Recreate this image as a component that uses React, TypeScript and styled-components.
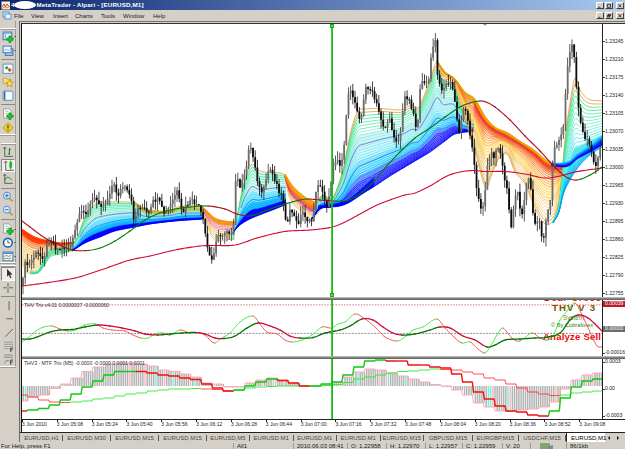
import React from 'react';

import styled, { createGlobalStyle } from 'styled-components';

type Point = [number, number];

const color = {
  face: '#d4d0c8',
  up: '#14c814',
  down: '#f01010',
};

const GlobalStyle = createGlobalStyle`
  body {
    margin: 0;
    overflow: hidden;
    background: ${color.face};
    font-family: "Liberation Sans", Arial, sans-serif;
  }
`;

/* ---------- layout ---------- */

const Window = styled.div`
  display: flex;
  flex-direction: column;
  width: 625px;
  height: 449px;
  overflow: hidden;
  color: #222;
  font-size: 6px;
  line-height: 1;
  white-space: nowrap;
`;

const TitleBar = styled.header`
  display: flex;
  align-items: center;
  flex: none;
  height: 10px;
  padding-left: 1px;
  background: linear-gradient(90deg, #0a246a, #3f5f9e 35%, #a6caf0);
  color: #fff;
  font-size: 6.2px;
  font-weight: bold;
`;

const Redaction = styled.span`
  width: 22px;
  height: 8px;
  border-radius: 50%;
  background: #fff;
`;

const TitleText = styled.span`
  flex: 1;
  letter-spacing: 0.16px;
`;

const MenuBar = styled.nav`
  display: flex;
  align-items: center;
  flex: none;
  height: 11px;
  padding-left: 2px;
  background: ${color.face};
`;

const MenuItem = styled.span<{ $width: number }>`
  width: ${props => props.$width}px;
`;

const Spacer = styled.div`
  flex: 1;
`;

const WindowButtons = styled.div`
  display: flex;
  gap: 1px;
  padding-right: 1px;
`;

const WindowButton = styled.span`
  box-sizing: border-box;
  display: flex;
  width: 8px;
  height: 7px;
  background: ${color.face};
  border: 0.5px solid;
  border-color: #fff #404040 #404040 #fff;

  &:last-child {
    margin-left: 2px;
  }
`;

const Body = styled.div`
  display: flex;
  flex: none;
  height: 421px;
`;

const Sidebar = styled.aside`
  flex: none;
  width: 19px;
  background: ${color.face};
`;

const ToolGroup = styled.div<{ $height: number }>`
  box-sizing: border-box;
  display: flex;
  flex-direction: column;
  align-items: flex-start;
  width: 16px;
  height: ${props => props.$height}px;
  border-right: 1px solid #a09c94;
  border-bottom: 1px solid #fff;
  box-shadow: 0 1px 0 #a09c94;
`;

const Grip = styled.div<{ $top: number }>`
  flex: none;
  width: 15px;
  height: 2px;
  margin: ${props => props.$top}px 1px 0;
  border-top: 1px solid #fff;
  border-bottom: 1px solid #999;
  box-sizing: border-box;
`;

const Rule = styled.div`
  flex: none;
  width: 14px;
  height: 1px;
  margin: 1.5px 1px 2px;
  background: #8c8a84;
`;

const Tool = styled.div<{ $pressed?: boolean }>`
  display: flex;
  align-items: center;
  box-sizing: border-box;
  flex: none;
  width: ${props => props.$pressed ? 14 : 16}px;
  height: 13.7px;
  padding-left: ${props => props.$pressed ? 1 : 0}px;
  margin-left: 0.5px;
  border: 0.5px solid;
  border-color: ${props => props.$pressed ? '#888 #fff #fff #888' : 'transparent'};
  background: ${props => props.$pressed ? '#eeece8' : 'none'};
`;

const Arrow = styled.i`
  flex: none;
  width: 0;
  border: 1.4px solid transparent;
  border-top: 1.8px solid #222;
  border-bottom: 0;
`;

const Main = styled.main`
  display: flex;
  flex-direction: column;
  box-sizing: border-box;
  width: 606px;
  border-left: 1px solid #6c6a66;
  border-top: 1px solid #77756f;
`;

const ChartFrame = styled.section`
  box-sizing: border-box;
  flex: none;
  height: 409px;
  margin-left: 1px;
  border-left: 1px solid #111;
  border-top: 1px solid #333;
  margin-top: 1px;
  background: #fff;
`;

const Panel = styled.div<{ $height: number }>`
  display: flex;
  height: ${props => props.$height}px;
  overflow: hidden;
`;

const Plot = styled.svg`
  display: block;
  flex: none;
  width: 580px;
  height: 100%;
`;

const Splitter = styled.div`
  box-sizing: border-box;
  height: 3px;
  background: #858585;
  border-top: 1px solid #b5b5b5;
  border-bottom: 1px solid #666;
`;

const PriceAxis = styled.div<{ $top: number }>`
  display: flex;
  flex-direction: column;
  justify-content: space-between;
  box-sizing: border-box;
  width: 23px;
  padding-top: ${props => props.$top}px;
  border-left: 1px solid #222;
  font-size: 5.1px;
`;

const Price = styled.span<{ $bg?: string }>`
  display: flex;
  align-items: center;
  height: 6px;
  color: ${props => props.$bg ? '#fff' : '#222'};
  background: ${props => props.$bg || 'none'};

  &::before {
    content: '';
    width: 2px;
    height: 1px;
    background: ${props => props.$bg || '#444'};
  }
`;

const TimeAxis = styled.div`
  display: grid;
  grid-template-columns: repeat(17, 34.83px);
  box-sizing: border-box;
  width: 603px;
  height: 10px;
  overflow: hidden;
  border-top: 1px solid #222;
  font-size: 5px;
`;

const Time = styled.span`
  &::before {
    content: '';
    display: block;
    width: 1px;
    height: 2px;
    background: #222;
  }
`;

const TabBar = styled.div`
  display: flex;
  align-items: center;
  flex: none;
  height: 10px;
  padding-left: 1px;
  border-top: 1px solid #222;
  background: ${color.face};
`;

const Tab = styled.span<{ $width: number }>`
  display: flex;
  align-items: center;
  justify-content: center;
  box-sizing: border-box;
  flex: none;
  width: ${props => props.$width}px;
  height: 6px;
  color: #4a4844;
  border-right: 1px solid #555;
`;

const ActiveTab = styled(Tab)`
  justify-content: flex-start;
  height: 10px;
  padding-left: 4px;
  color: #000;
  background: #fff;
  border-right: 0;
  border-left: 1px solid #222;
`;

const TabArrows = styled.svg`
  width: 17px;
  height: 8px;
`;

const StatusBar = styled.footer`
  display: flex;
  flex: none;
  height: 7px;
  overflow: hidden;
  padding-top: 1px;
  background: ${color.face};
`;

const Status = styled.span<{ $width: number; $first?: boolean }>`
  box-sizing: border-box;
  flex: none;
  width: ${props => props.$width}px;
  height: 6px;
  padding-left: ${props => props.$first ? 1 : 3}px;
  border-left: ${props => props.$first ? '0' : '1px solid #999'};
`;

/* ---------- data ---------- */

const price: Point[] = [
  [22, 289], [24, 276], [26, 265], [30, 265], [34, 258], [38, 254], [42, 256], [46, 254], [50, 238], [54, 243],
  [58, 249], [62, 249], [66, 247], [70, 245], [74, 240], [78, 223], [82, 214], [86, 212], [90, 208], [94, 200],
  [100, 201], [104, 206], [108, 200], [112, 188], [115, 186], [119, 194], [124, 187], [128, 192], [132, 200],
  [135, 218], [140, 207], [145, 209], [150, 214], [155, 201], [160, 202], [165, 213], [170, 208], [175, 198],
  [178, 192], [183, 212], [188, 205], [193, 202], [200, 208], [205, 225], [208, 245], [213, 260], [217, 240],
  [222, 236], [228, 230], [232, 234], [234, 240], [236, 185], [242, 185], [247, 170], [250, 146], [252, 149],
  [256, 165], [261, 190], [266, 187], [270, 170], [275, 177], [280, 190], [285, 203], [288, 225], [292, 210],
  [298, 223], [304, 213], [310, 222], [313, 220], [316, 200], [320, 182], [324, 195], [328, 205], [333, 175],
  [338, 158], [342, 163], [346, 138], [348, 105], [352, 93], [357, 105], [362, 117], [367, 88], [372, 91],
  [377, 103], [382, 118], [386, 128], [390, 120], [395, 135], [400, 140], [403, 120], [406, 97], [411, 102],
  [415, 115], [418, 127], [421, 93], [425, 81], [430, 79], [433, 52], [437, 44], [439, 80], [445, 87],
  [450, 82], [455, 95], [460, 132], [465, 106], [470, 128], [474, 150], [478, 192], [484, 205], [490, 157],
  [495, 156], [500, 148], [505, 175], [509, 195], [512, 230], [515, 205], [518, 190], [523, 214], [527, 186],
  [531, 182], [535, 222], [540, 220], [544, 239], [548, 215], [551, 205], [555, 150], [560, 140], [565, 120],
  [568, 72], [572, 50], [574, 40], [577, 80], [581, 120], [586, 138], [592, 147], [597, 166], [602, 147],
];

const movingAverage: Point[] = [
  [22, 221], [30, 227], [45, 238], [60, 245], [72, 250], [87, 250.5], [100, 248], [115, 241], [130, 231],
  [145, 220], [160, 213], [175, 209], [190, 207], [208, 206], [225, 209], [237, 214], [249, 216], [257, 214],
  [270, 209], [285, 204], [300, 200], [308, 199], [320, 200], [335, 201], [345, 201], [355, 197], [365, 190],
  [375, 180], [385, 168], [400, 152], [415, 138], [430, 128], [445, 117], [460, 107], [470, 103], [480, 101],
  [486, 102], [495, 107], [510, 120], [525, 136], [540, 151], [550, 162], [560, 172], [568, 178], [577, 180],
  [590, 175], [602, 167],
];

const baseline: Point[] = [
  [22, 286], [45, 283], [75, 278], [95, 272], [115, 265], [130, 260], [150, 256], [175, 250], [200, 246],
  [212, 245.5], [235, 245], [257, 238], [285, 231.5], [310, 230], [330, 227.5], [343, 223], [360, 214],
  [375, 206], [390, 200], [405, 195], [415, 193], [430, 186], [447, 176], [460, 172], [473, 170.5],
  [485, 171.5], [505, 171.5], [525, 174], [545, 178], [560, 176], [575, 172], [602, 168],
];

// solid part of a ribbon: from, to (0 = fast edge, 1 = slow edge), fill, opacity
type Wash = [number, number, string, number];

interface RibbonProps {
  fast: Point[];
  slow: Point[];
  colors: string[];
  washes?: Wash[];
  count?: number;
  bias?: number;
  width?: number;
}

const rising = ['#d9952c', '#25e88d', '#4ce9a8', '#7fe9cf', '#8eeae6', '#79e4f4', '#48e2ff', '#00d0ff', '#0aa8ff', '#0000ff', '#0000ff'];
const risingWashes: Wash[] = [[0.02, 0.5, '#b8f4e4', 0.5], [0.5, 0.72, '#40dcff', 0.6], [0.7, 0.86, '#00b4ff', 0.85], [0.84, 1, '#0000ff', 0.95]];
const falling = ['#d99a30', '#eec169', '#f1cf79', '#f0c060', '#ffd54a', '#ff9b2e', '#f8602a', '#f28a14', '#e0a000'];

const ribbons: RibbonProps[] = [
  {
    fast: [[22, 264], [28, 273], [37, 273], [43, 266], [50, 255], [60, 253], [75, 249]],
    slow: [[22, 229], [35, 237], [50, 241], [62, 243], [75, 242]],
    colors: ['#e8bd59', '#f1c465', '#f4c870', '#f0a94a', '#ee9447', '#ff4a10', '#ff3800'],
    washes: [[0, 0.7, '#ffe2a0', 0.5], [0.68, 0.86, '#f6a060', 0.7], [0.84, 1, '#ff3c00', 1]],
    count: 17,
  },
  {
    fast: [[30, 273], [38, 273], [44, 266], [50, 257], [60, 254], [75, 250]],
    slow: [[30, 272], [38, 271], [44, 260], [50, 250], [60, 248], [75, 246]],
    colors: ['#28d878', '#24e6a4', '#42e0c0'],
    count: 8,
  },
  {
    fast: [[72, 247], [78, 236], [83, 222], [90, 210], [97, 203], [110, 202], [125, 202], [136, 203], [143, 209], [150, 211], [170, 211], [180, 208], [190, 208], [203, 209]],
    slow: [[72, 251], [85, 243], [100, 237], [115, 231], [135, 227], [150, 224], [175, 221], [203, 219]],
    colors: rising,
    washes: risingWashes,
    count: 24,
  },
  {
    fast: [[134, 202], [143, 208], [150, 210], [170, 211], [178, 207], [190, 206], [203, 206]],
    slow: [[134, 204], [143, 211], [150, 213], [170, 213], [178, 210], [190, 210], [203, 210]],
    colors: ['#e09a00', '#f0a818'],
    count: 4,
  },
  {
    fast: [[201, 210], [207, 225], [212, 237], [218, 241], [225, 240], [235, 239]],
    slow: [[201, 205], [207, 211], [215, 218], [225, 221], [237, 222]],
    colors: ['#e8c070', '#f0c86c', '#edba5c', '#e8548c', '#f5862c', '#f09000'],
    washes: [[0.78, 1, '#f09a10', 0.85]],
    count: 15,
  },
  {
    fast: [[233, 240], [237, 218], [241, 196], [246, 176], [252, 164], [258, 170], [265, 172], [280, 173], [286, 175]],
    slow: [[233, 232], [240, 225], [250, 219], [262, 214], [275, 209], [287, 204]],
    colors: rising,
    washes: risingWashes,
    count: 23,
  },
  {
    fast: [[285, 178], [289, 196], [295, 206], [303, 212], [311, 219], [317, 214], [322, 208]],
    slow: [[285, 174], [292, 185], [300, 193], [310, 200], [322, 203]],
    colors: ['#e6b55c', '#f0c76c', '#e5a650', '#c8208c', '#ff4414', '#ff7a10', '#f59a10', '#e8a000'],
    washes: [[0.45, 0.58, '#c8208c', 0.6], [0.56, 0.78, '#ff5018', 0.8], [0.76, 1, '#f5a010', 0.8]],
    count: 18,
  },
  {
    fast: [[312, 219], [318, 201], [323, 195], [330, 199], [334, 196], [339, 183], [344, 166], [348, 145], [352, 127], [358, 111], [365, 109], [380, 108.5], [400, 110], [406, 108], [412, 105], [418, 108], [424, 96], [430, 80], [437, 62], [443, 77], [450, 80], [455, 85], [460, 105], [466, 116], [474, 120]],
    slow: [[312, 219], [320, 209], [330, 207], [345, 204], [360, 195], [375, 186], [390, 176], [405, 167], [415, 161], [430, 152], [445, 141], [455, 134], [474, 131]],
    colors: rising,
    washes: [[0.3, 0.62, '#a8f0f4', 0.5], [0.6, 0.8, '#70d8ff', 0.6], [0.78, 1, '#5a5aff', 0.65]],
    count: 36,
  },
  {
    fast: [[318, 205], [330, 203], [340, 202], [350, 197], [362, 186], [374, 174]],
    slow: [[318, 208], [330, 207], [340, 206], [350, 202], [362, 194], [374, 186]],
    colors: ['#00a0ff', '#0000ff', '#0000ff'],
    washes: [[0.3, 1, '#0000ff', 0.75]],
    count: 5,
    width: 0.8,
  },
  {
    fast: [[437, 62], [443, 75], [455, 82], [460, 100], [468, 130], [475, 150], [480, 170], [486, 188], [492, 174], [500, 157], [508, 155], [515, 172], [525, 184], [535, 208], [545, 224], [552, 222], [557, 211], [562, 188]],
    slow: [[437, 61], [445, 72], [455, 79], [465, 92], [475, 99], [485, 116], [495, 127], [508, 133], [520, 141], [533, 149], [545, 159], [555, 165], [563, 165]],
    colors: falling,
    washes: [[0.35, 0.8, '#ffe6a0', 0.45], [0.85, 1, '#f8a010', 0.7]],
    count: 27,
    bias: 1.5,
  },
  {
    fast: [[474, 118], [490, 134], [505, 142], [520, 149], [535, 162], [548, 174], [562, 176]],
    slow: [[474, 99], [485, 119], [495, 128], [505, 133], [520, 142], [535, 152], [548, 163], [562, 165]],
    colors: ['#ee9b5c', '#f07838', '#ff5a20', '#d42a60', '#ff3c00', '#f8a000'],
    washes: [[0.2, 0.7, '#ff8a50', 0.6], [0.65, 1, '#ff5a10', 0.75]],
    count: 10,
    width: 0.9,
  },
  {
    fast: [[553, 222], [559, 205], [562, 175], [565, 140], [570, 103], [575, 78], [580, 90], [588, 99], [602, 101]],
    slow: [[553, 223], [559, 212], [563, 195], [570, 180], [580, 165], [590, 155], [602, 147]],
    colors: ['#d9952c', '#25e88d', '#38e8a0', '#5ee8c0', '#5de8de', '#36e2e4', '#00d8ff', '#00a0ff'],
    washes: [[0.75, 1, '#20d8e8', 0.7]],
    count: 22,
  },
  {
    fast: [[551, 163], [563, 163], [570, 161], [577, 155], [590, 146], [602, 136]],
    slow: [[551, 165], [563, 167], [570, 165], [577, 159], [590, 152], [602, 145]],
    colors: ['#00a8ff', '#0040ff', '#0000ff'],
    washes: [[0, 0.5, '#00a8ff', 0.8], [0.45, 1, '#0000ff', 0.9]],
    count: 5,
  },
];

const trixFast: Point[] = [
  [22, 342], [28, 338], [36, 331], [44, 327], [52, 326], [60, 329], [68, 331], [75, 330], [85, 325], [95, 324],
  [103, 328], [112, 330], [125, 331], [133, 335], [141, 338], [148, 338], [155, 334], [162, 333], [170, 335],
  [180, 330], [190, 333], [200, 333], [206, 336], [211, 341], [215, 343], [222, 338], [230, 333], [240, 322],
  [253, 316], [260, 324], [267, 332], [277, 334], [285, 340], [292, 342], [302, 340], [312, 335], [322, 327],
  [332, 328], [338, 324], [345, 322], [355, 314], [365, 319], [376, 328], [385, 337], [397, 341], [405, 337],
  [413, 330], [423, 327], [437, 319], [445, 328], [455, 338], [462, 343], [470, 342], [478, 349], [485, 353],
  [490, 347], [500, 330], [503, 328], [513, 339], [520, 341], [532, 333], [540, 338], [547, 340], [553, 336],
  [560, 320], [568, 310], [575, 303], [582, 315], [590, 332], [597, 346], [602, 347],
];

const trixSlow: Point[] = [
  [22, 339], [30, 339], [37, 337], [50, 332], [60, 330], [72, 329.5], [85, 327], [98, 325], [110, 326], [122, 328],
  [135, 331], [145, 334], [158, 335], [170, 334], [182, 333], [195, 332.5], [205, 334], [215, 338], [224, 338.5],
  [235, 336], [247, 328], [258, 323], [270, 326], [280, 330], [290, 336], [300, 338], [313, 337.5], [325, 333],
  [340, 330], [350, 326], [362, 319], [373, 320], [383, 327], [393, 333], [402, 335], [415, 334], [430, 330],
  [440, 327], [450, 328], [463, 336], [475, 340], [487, 347], [495, 345], [505, 340], [520, 339], [535, 338],
  [545, 337.5], [560, 333], [570, 320], [578, 315], [588, 318], [602, 331],
];

// one value per M5 bar
const histogram = [
  401, 397, 395, 388.5, 384, 378, 371.5, 367, 364, 363, 363, 364, 366, 370, 371.5, 374, 377, 383, 384,
  387, 387, 383, 380, 378, 380, 383, 386, 386, 385, 382, 377, 372, 369, 370, 373, 376, 379, 382, 384.5,
  386, 390, 395, 403, 407, 411, 411.5, 410, 409, 407, 402, 389, 380, 375, 373,
];

const mtfFast = [
  411, 410, 408.5, 405, 400, 394, 387, 381, 375, 371.5, 371.5, 371.5, 373, 375, 376, 378, 379.5, 384, 388,
  391, 390, 386, 382, 379, 380.5, 383, 386, 386, 384, 382, 375, 367, 361, 360, 361, 361, 365, 365, 367, 368,
  374, 382, 392, 399, 406, 411, 412, 415, 416, 411, 398, 387, 381, 379,
];

const mtfSlow = [
  395, 397, 400, 402, 402.5, 402, 401, 399, 398, 396, 394, 393, 391, 390, 389, 389, 388.5, 389, 389.5, 391,
  390, 388, 387, 386.5, 386, 386, 386, 386, 385.5, 384.5, 382.5, 379, 377, 375, 373, 371.5, 371, 370, 369,
  369.5, 370, 372, 374, 378, 380, 384, 388, 392, 394, 395.5, 395, 393, 392, 391,
];

const prices = ['1.23245', '1.23210', '1.23175', '1.23140', '1.23105', '1.23070', '1.23035', '1.23000', '1.22965', '1.22930', '1.22895', '1.22860', '1.22825', '1.22790', '1.22755'];

const times = ['2010', '05:08', '05:24', '05:40', '05:56', '06:12', '06:28', '06:44', '07:00', '07:16', '07:32', '07:48', '08:04', '08:20', '08:36', '08:52', '09:08'];

const tabs: [string, number][] = [
  ['EURUSD,H1', 42], ['EURUSD,M30', 48], ['EURUSD,M15', 48], ['EURUSD,M15', 48], ['EURUSD,M5', 43],
  ['EURUSD,M1', 43.5], ['EURUSD,M1', 43.5], ['EURUSD,M1', 43.5], ['EURUSD,M15', 43.5], ['GBPUSD,M15', 49],
  ['EURGBP,M15', 46], ['USDCHF,M15', 47],
];

const menu: [string, number][] = [
  ['File', 17], ['View', 22], ['Insert', 22], ['Charts', 26], ['Tools', 22], ['Window', 30], ['Help', 16],
];

/* ---------- drawing helpers ---------- */

const at = (points: Point[], x: number) => {
  if (x <= points[0][0]) return points[0][1];
  let i = 0;
  while (i < points.length - 2 && points[i + 1][0] < x) i++;
  const [x0, y0] = points[i];
  const [x1, y1] = points[i + 1];
  const before = points[i - 1] || points[i];
  const after = points[i + 2] || points[i + 1];
  const h = x1 - x0;
  const t = Math.min(1, (x - x0) / h);
  const m0 = ((y1 - before[1]) / (x1 - before[0])) * h;
  const m1 = ((after[1] - y0) / (after[0] - x0)) * h;
  const t2 = t * t;
  const t3 = t2 * t;
  return (2 * t3 - 3 * t2 + 1) * y0 + (t3 - 2 * t2 + t) * m0 + (3 * t2 - 2 * t3) * y1 + (t3 - t2) * m1;
};

const samples = (from: number, to: number, y: (x: number) => number) => {
  const out: string[] = [];
  for (let x = from; x < to; x += 1.5) out.push(`${x},${y(x).toFixed(2)}`);
  out.push(`${to},${y(to).toFixed(2)}`);
  return out;
};

const trace = (from: number, to: number, y: (x: number) => number) => 'M' + samples(from, to, y).join('L');

const Ribbon = ({ fast, slow, colors, washes = [], count = 20, bias = 1.4, width = 0.75 }: RibbonProps) => {
  const from = fast[0][0];
  const to = Math.min(fast[fast.length - 1][0], slow[slow.length - 1][0]);
  const mix = (t: number) => (x: number) => at(fast, x) * (1 - t) + at(slow, x) * t;
  const lines = Array.from({ length: count }, (_, i) => {
    const t = 1 - Math.pow(1 - i / (count - 1), bias);
    return (
      <path
        key={i}
        d={trace(from, to, mix(t))}
        stroke={colors[Math.round(t * (colors.length - 1))]}
        strokeWidth={width}
      />
    );
  });
  return (
    <g fill="none">
      {washes.map(([a, b, fill, opacity]) => (
        <path
          key={a}
          d={`M${samples(from, to, mix(a)).concat(samples(from, to, mix(b)).reverse()).join('L')}Z`}
          fill={fill}
          opacity={opacity}
        />
      ))}
      {lines}
    </g>
  );
};

const Guide = ({ points, t, stroke }: { points: [Point[], Point[]]; t: number; stroke: string }) => (
  <path
    d={trace(points[0][0][0] + 8, points[0][points[0].length - 1][0], x => at(points[0], x) * (1 - t) + at(points[1], x) * t)}
    fill="none"
    stroke={stroke}
    strokeWidth={0.7}
  />
);

// line that changes colour with its direction
const Slope = ({ points, up, down, width }: { points: Point[]; up: string; down: string; width: number }) => (
  <g fill="none" strokeWidth={width} strokeLinecap="round">
    {points.slice(1).map((point, i) => (
      <path
        key={i}
        d={trace(points[i][0], point[0], x => at(points, x))}
        stroke={point[1] <= points[i][1] ? up : down}
      />
    ))}
  </g>
);

const noise = (n: number) => {
  const s = Math.sin(n * 12.9898) * 43758.5453;
  return s - Math.floor(s);
};

const Candles = () => {
  const bars: React.ReactNode[] = [];
  const step = 2.17;
  for (let i = 0; i < 267; i++) {
    const x = 23 + i * step;
    const open = at(price, x - step / 2) + (noise(i) - 0.5) * 6;
    const close = at(price, x + step / 2) + (noise(i + 1) - 0.5) * 6;
    const top = Math.min(open, close);
    const bottom = Math.max(open, close, top + 1);
    const high = top - noise(i + 300) * 9;
    const low = bottom + noise(i + 700) * 9;
    const rise = close < open;
    bars.push(
      <g key={i}>
        <rect x={x - 0.4} y={high} width={0.8} height={low - high} fill={rise ? '#333' : '#111'} />
        <rect x={x - 0.9} y={top} width={1.8} height={bottom - top} fill={rise ? '#6c6c6c' : '#0c0c0c'} />
      </g>
    );
  }
  return <>{bars}</>;
};

const edge = (i: number) => i === 0 ? 22 : 27 + (i - 1) * 10.87;

const Steps = ({ values, stroke, width }: { values: number[]; stroke: (i: number) => string; width: number }) => (
  <g fill="none" strokeWidth={width}>
    {values.map((value, i) => (
      <path
        key={i}
        d={`M${edge(i) - 0.3},${values[i - 1] || value}L${edge(i) + 0.8},${value}H${Math.min(602, edge(i + 1))}`}
        stroke={stroke(i)}
      />
    ))}
  </g>
);

const Histogram = () => {
  const bars: React.ReactNode[] = [];
  for (let i = 0; i < 267; i++) {
    const x = 22.5 + i * 2.174;
    const index = x < 27 ? 0 : Math.min(53, Math.floor((x - 27) / 10.87) + 1);
    const value = histogram[index];
    const tone = noise(i + 40);
    bars.push(
      <rect
        key={i}
        x={x}
        y={Math.min(386, value)}
        width={1.5}
        height={Math.max(1, Math.abs(value - 386))}
        fill={tone > 0.93 ? '#7ff0d8' : tone > 0.85 ? '#ffb8c0' : '#b4b4b4'}
      />
    );
  }
  return <>{bars}</>;
};

const fastRed = (i: number) =>
  (i >= 11 && i < 20) || (i >= 24 && i < 27) || (i >= 34 && i < 49) || i === 0 ? color.down : color.up;

const slowRed = (i: number) =>
  i < 5 || (i >= 17 && i < 20) || (i >= 39 && i < 50) ? '#ff3838' : '#30e830';

const Cursor = ({ top, bottom, handles }: { top: number; bottom: number; handles?: number[] }) => (
  <g>
    <rect x={331.2} y={top} width={1.8} height={bottom - top} fill="#16bd16" />
    {(handles || []).map(y => (
      <rect key={y} x={330.5} y={y} width={3} height={3} fill="#60e060" stroke="#00a800" strokeWidth={0.9} />
    ))}
  </g>
);

/* ---------- icons ---------- */

const Plus = () => <path d="M6.3 4.5h2v2h2v2h-2v2h-2v-2h-2v-2h2z" fill="#16cf26" stroke="#087a10" strokeWidth="0.5" />;

const glyphs: Record<string, React.ReactNode> = {
  newChart: <><rect x="1" y="1" width="8" height="7" fill="#e8f4ff" stroke="#427cb0" /><path d="M1 2h8M3 3v4" stroke="#66a2d0" /><Plus /></>,
  profiles: <><rect x="3" y="3.5" width="7" height="6" fill="#a9c9e8" stroke="#4a7cac" /><rect x="1" y="1" width="7.5" height="6" fill="#eaf5ff" stroke="#4a85bd" /><path d="M2 5l2-1 2 1 2-2" stroke="#5d8fb9" fill="none" strokeWidth=".6" /></>,
  market: <><rect x="1" y="1" width="9" height="8.5" fill="#fff" stroke="#6b9ac4" /><path d="M2.5 4.5l2-2 1.5 2-2 1.5z" fill="#18a838" /><path d="M5 6l2-1.7L9 6.5 7 8.5z" fill="#e84a2c" /></>,
  navigator: <><path d="M1 2h3l1 1h3v4H1z" fill="#f5dc78" stroke="#b79324" strokeWidth=".6" /><path d="M7 3.5l1 2 2.3.2-1.7 1.6.6 2.4L7 8.5 4.8 9.7l.6-2.4-1.6-1.6L6 5.5z" fill="#ffe23d" stroke="#b48612" strokeWidth=".6" /></>,
  terminal: <><rect x="1" y="1" width="9" height="8.5" rx="1" fill="#f8fcff" stroke="#6fa0cb" /><path d="M2.4 1.4v7.5" stroke="#2e72b2" strokeWidth="1.5" /></>,
  order: <><path d="M1.5.8h5l2 2v6.5h-7z" fill="#fff" stroke="#888" strokeWidth=".7" /><path d="M3 3h3M3 5h3" stroke="#888" strokeWidth=".6" /><Plus /></>,
  expert: <><path d="M5.5.7l4.6 4.6-4.6 4.6L.9 5.3z" fill="#f2cf22" stroke="#b68b0c" strokeWidth=".8" /><path d="M5.5 3v3M5.5 7v1.1" stroke="#333" strokeWidth="1.1" /></>,
  bars: <><path d="M2.5 1v8.5H10M1.3 2.6L2.5 1l1.2 1.6" stroke="#555" strokeWidth=".8" fill="none" /><path d="M6.8 2v6M5.7 7h1M6.8 3h1.4" stroke="#128c22" strokeWidth="1" /></>,
  candle: <><path d="M2.5 1v8.5H10M1.3 2.6L2.5 1l1.2 1.6" stroke="#555" strokeWidth=".8" fill="none" /><path d="M7 .8v8" stroke="#128c22" strokeWidth=".8" /><rect x="5.8" y="2" width="2.5" height="5" fill="#19b72c" /></>,
  line: <><path d="M2.5 1v8.5H10M1.3 2.6L2.5 1l1.2 1.6" stroke="#555" strokeWidth=".8" fill="none" /><path d="M2.5 7C4 3 6 3 9 6.5" stroke="#128c22" strokeWidth=".9" fill="none" /></>,
  zoomIn: <><path d="M6.5 6.5l3.3 3" stroke="#c59a38" strokeWidth="1.6" /><circle cx="4.5" cy="4.3" r="3.2" fill="#d8ecff" stroke="#4b8ac8" strokeWidth=".9" /><path d="M2.8 4.3h3.4M4.5 2.6V6" stroke="#2b70b5" strokeWidth=".9" /></>,
  zoomOut: <><path d="M6.5 6.5l3.3 3" stroke="#c59a38" strokeWidth="1.6" /><circle cx="4.5" cy="4.3" r="3.2" fill="#d8ecff" stroke="#4b8ac8" strokeWidth=".9" /><path d="M2.8 4.3h3.4" stroke="#2b70b5" strokeWidth=".9" /></>,
  clock: <><circle cx="5.4" cy="5.2" r="4" fill="#fff" stroke="#1c66b8" strokeWidth="1.5" /><path d="M5.4 2.8v2.6h2" stroke="#333" strokeWidth=".7" fill="none" /></>,
  template: <><rect x="1" y="1" width="9" height="8" fill="#f5faff" stroke="#477fb3" /><path d="M1 2h9" stroke="#4d91d0" strokeWidth="1.5" /><path d="M2 5l2-1 2 1 2.5-1" stroke="#c44" fill="none" strokeWidth=".7" /><path d="M2 7.3l2-.8 2 .8 2.5-1" stroke="#2a8b3a" fill="none" strokeWidth=".7" /></>,
  pointer: <path d="M3.7 1v7l1.7-1.5L6.6 9.3l1.1-.5-1.2-2.6 2.2-.2z" fill="#333" />,
  cross: <path d="M5.5 1v3.6M5.5 6v4M1 5.3h3.7M6.3 5.3H10" stroke="#555" strokeWidth=".8" />,
  vertical: <path d="M6.5 1v8.5" stroke="#555" strokeWidth=".8" />,
  horizontal: <path d="M4 5.3h6" stroke="#555" strokeWidth=".8" />,
  trend: <path d="M3 8.8l7-7" stroke="#555" strokeWidth=".8" />,
  fibo: <><path d="M2 1h8M2 3h8M2 5h8M2 7h5" stroke="#666" strokeWidth=".6" strokeDasharray="1 .4" /><path d="M8 10V6.6h2.2M8 8.2h1.6" stroke="#333" strokeWidth=".8" fill="none" /></>,
  fan: <><path d="M2 1h8M2 3h8M2 9l2-3h2l1 1" stroke="#666" strokeWidth=".6" fill="none" /><path d="M8 10V5.6h2.2M8 7.5h1.6" stroke="#333" strokeWidth=".8" fill="none" /></>,
};

const Glyph = styled.svg`
  flex: none;
  width: 12px;
  height: 12px;
`;

const ToolButton = ({ name, menu: hasMenu, pressed }: { name: string; menu?: boolean; pressed?: boolean }) => (
  <Tool $pressed={pressed}>
    <Glyph viewBox="0 0 11 11">{glyphs[name]}</Glyph>
    {hasMenu && <Arrow />}
  </Tool>
);

const Controls = ({ restore }: { restore?: boolean }) => (
  <WindowButtons>
    {['M1.5 4.5h2.5', restore ? 'M2.8 1h2.5v2H2.8zM1.5 2.3H4v2H1.5z' : 'M1.5 1h3.8v3.5H1.5z', 'M1.7 1l3.3 3.5M5 1L1.7 4.5'].map(d => (
      <WindowButton key={d}>
        <svg width="7" height="6" viewBox="0 0 7 6"><path d={d} fill="none" stroke="#111" strokeWidth=".9" /></svg>
      </WindowButton>
    ))}
  </WindowButtons>
);

/* ---------- page ---------- */

const Tools = () => (
  <Sidebar>
    <ToolGroup $height={114}>
      <Grip $top={7} />
      <ToolButton name="newChart" menu />
      <ToolButton name="profiles" menu />
      <Rule />
      <ToolButton name="market" />
      <ToolButton name="navigator" />
      <ToolButton name="terminal" />
      <Rule />
      <ToolButton name="order" />
      <ToolButton name="expert" />
    </ToolGroup>
    <ToolGroup $height={128}>
      <Grip $top={8} />
      <ToolButton name="bars" />
      <ToolButton name="candle" pressed />
      <ToolButton name="line" />
      <Rule />
      <ToolButton name="zoomIn" />
      <ToolButton name="zoomOut" />
      <Rule />
      <ToolButton name="order" menu />
      <ToolButton name="clock" menu />
      <ToolButton name="template" menu />
    </ToolGroup>
    <ToolGroup $height={104}>
      <Grip $top={2} />
      <ToolButton name="pointer" pressed />
      <ToolButton name="cross" />
      <Rule />
      <ToolButton name="vertical" />
      <ToolButton name="horizontal" />
      <ToolButton name="trend" />
      <ToolButton name="fibo" />
      <ToolButton name="fan" />
    </ToolGroup>
  </Sidebar>
);

const PricePanel = () => (
  <Panel $height={273}>
    <Plot viewBox="22 24 580 273">
      {ribbons.map((ribbon, i) => <Ribbon key={i} {...ribbon} />)}
      {[2, 5, 7].map(i => (
        <React.Fragment key={i}>
          <Guide points={[ribbons[i].fast, ribbons[i].slow]} t={0.42} stroke="#5b52c8" />
          <Guide points={[ribbons[i].fast, ribbons[i].slow]} t={0.66} stroke="#3b58d8" />
        </React.Fragment>
      ))}
      <Candles />
      <path d={trace(22, 602, x => at(baseline, x))} fill="none" stroke="#d00a32" strokeWidth={1.1} />
      <Slope points={movingAverage} up="#087808" down="#a80c18" width={1.1} />
      <path d="M483 24h4l-2 2z" fill="#999" />
      <Cursor top={24} bottom={297} handles={[24.5, 293.5]} />
    </Plot>
    <PriceAxis $top={14.5}>
      {prices.map(value => <Price key={value}>{value}</Price>)}
    </PriceAxis>
  </Panel>
);

const TrixPanel = () => (
  <Panel $height={56}>
    <Plot viewBox="22 300 580 56">
      <path d="M22 304.9H602" stroke="#d86870" strokeDasharray="1.5 1.3" strokeWidth={0.9} />
      <path d="M22 333.4H602" stroke="#777" strokeDasharray="2 1.2" strokeWidth={0.8} />
      <g fontWeight="bold" fontFamily="Liberation Sans, sans-serif">
        <text x={544} y={301.2} fontSize={9} fill="#f00808" textLength={57}>Dear Cross</text>
        <text x={552} y={311} fontSize={9.6} fill="#6a5a00" textLength={43}>THV V 3</text>
        <text x={563} y={319.6} fontSize={6.4} fontWeight="normal" fill="#8a7c32" textLength={21}>System</text>
        <text x={551} y={327} fontSize={5.6} fontWeight="normal" fill="#167c16" textLength={42}>© By Cobraforex</text>
        <text x={543} y={339.5} fontSize={9.6} fill="#f00808" textLength={58}>Analyze Sell</text>
      </g>
      <Slope points={trixFast} up="#38e838" down="#f84848" width={0.9} />
      <Slope points={trixSlow} up="#067006" down="#cc0a38" width={1.3} />
      <text x={24} y={306.5} fontSize={5.2} fill="#333" textLength={85}>THV Trix v4.01 0.0000007 -0.0000060</text>
      <Cursor top={300} bottom={356} />
    </Plot>
    <PriceAxis $top={1}>
      <Price $bg="#b81c24">0.00039</Price>
      <Price $bg="#6c6c6c">0.00000</Price>
      <Price>-0.00016</Price>
    </PriceAxis>
  </Panel>
);

const MtfPanel = () => (
  <Panel $height={60}>
    <Plot viewBox="22 359 580 60">
      <Histogram />
      <Steps values={histogram} stroke={() => '#ffa8b4'} width={1} />
      <Steps values={mtfSlow} stroke={slowRed} width={0.9} />
      <Steps values={mtfFast} stroke={fastRed} width={1.4} />
      <text x={24} y={364.5} fontSize={5.2} fill="#333" textLength={121}>THV3 - MTF Trix (M5) -0.0000 -0.0000 0.0001 0.0001</text>
      <Cursor top={359} bottom={419} />
    </Plot>
    <PriceAxis $top={0}>
      <Price>0.0003</Price>
      <Price>0.00</Price>
      <Price>-0.0003</Price>
    </PriceAxis>
  </Panel>
);

const App = () => (
  <Window>
    <GlobalStyle />
    <TitleBar>
      <svg width="10" height="9" viewBox="0 0 10 9">
        <rect x=".5" y=".5" width="8.5" height="8" fill="#f8f0d8" />
        <path d="M1 6l2-3 1.5 3L6 3l2.5 3" stroke="#e03838" fill="none" />
        <path d="M1 8l2-2 2 1 3-1" stroke="#d49b28" fill="none" />
      </svg>
      <span>4</span>
      <Redaction />
      <TitleText>MetaTrader - Alpari - [EURUSD,M1]</TitleText>
      <Controls />
    </TitleBar>
    <MenuBar>
      <svg width="12" height="9" viewBox="0 0 12 9">
        <rect x="1" y="1" width="6" height="5" fill="#e4f3ff" stroke="#5d95ca" />
        <rect x="3" y="3" width="6" height="5" fill="#e4f3ff" stroke="#5d95ca" />
      </svg>
      {menu.map(([label, width]) => <MenuItem key={label} $width={width}>{label}</MenuItem>)}
      <Spacer />
      <Controls restore />
    </MenuBar>
    <Body>
      <Tools />
      <Main>
        <ChartFrame>
          <PricePanel />
          <Splitter />
          <TrixPanel />
          <Splitter />
          <MtfPanel />
          <TimeAxis>
            {times.map(time => <Time key={time}>3 Jun {time}</Time>)}
          </TimeAxis>
        </ChartFrame>
        <TabBar>
          {tabs.map(([label, width], i) => <Tab key={i} $width={width}>{label}</Tab>)}
          <ActiveTab $width={39}>EURUSD,M1</ActiveTab>
          <TabArrows viewBox="0 0 17 8">
            <path d="M5 2v4L3 4zM12 2v4l2-2z" fill="#111" />
          </TabArrows>
        </TabBar>
      </Main>
    </Body>
    <StatusBar>
      <Status $width={233} $first>For Help, press F1</Status>
      <Status $width={60}>All1</Status>
      <Status $width={54}>2010.06.03 08:41</Status>
      <Status $width={39}>O: 1.22958</Status>
      <Status $width={39}>H: 1.22970</Status>
      <Status $width={37}>L: 1.22957</Status>
      <Status $width={40}>C: 1.22959</Status>
      <Status $width={28}>V: 20</Status>
      <Status $width={36}>
        <svg width="22" height="6" viewBox="0 0 22 6">
          <path d="M7 0v6M9 0v6M11 0v6M13 0v6M15 0v6" stroke="#2f7a1c" />
          <path d="M16 3v3M18 2v4" stroke="#2c4a8c" />
        </svg>
      </Status>
      <Status $width={59}>86/1kb</Status>
    </StatusBar>
  </Window>
);

export default App;
